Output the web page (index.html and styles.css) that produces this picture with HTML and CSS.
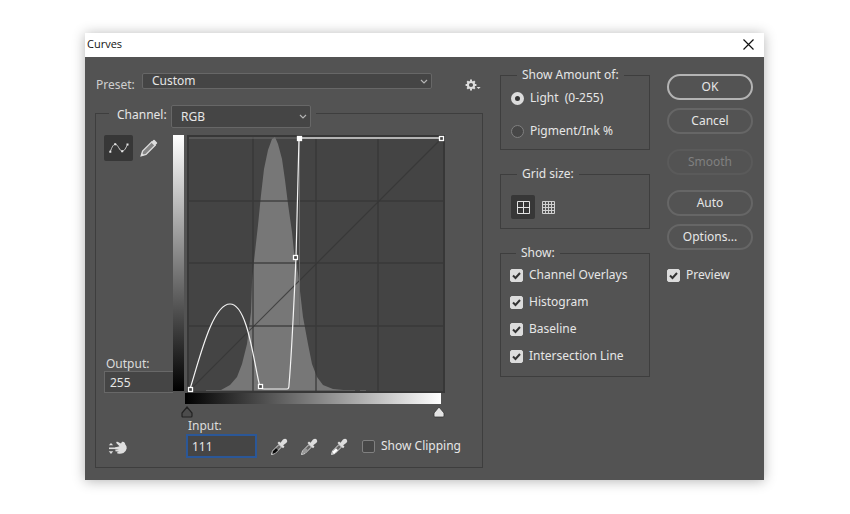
FILE: index.html
```html
<!DOCTYPE html>
<html lang="en">
<head>
  <meta charset="UTF-8" />
  <meta name="viewport" content="width=device-width, initial-scale=1.0"/>
  <title>Curves</title>
  <link rel="stylesheet" href="styles.css">
</head>
<body>

<div class="dialog">
  <div class="titlebar">
    <h1>Curves</h1>
    <button class="close" type="button" aria-label="Close">
      <svg width="11" height="11" viewBox="0 0 11 11"><path d="M0.5 0.5l10 10M10.5 0.5l-10 10" stroke="#111" stroke-width="1.2"/></svg>
    </button>
  </div>

  <form class="content">

    <div class="main">
      <div class="preset-row">
        <label for="preset">Preset:</label>
        <select id="preset" class="select preset">
          <option>Custom</option>
        </select>
        <button class="icon-btn gear" type="button" aria-label="Preset options">
          <svg width="16" height="12" viewBox="0 0 16 12">
            <circle cx="6" cy="6" r="3.1" fill="none" stroke="#dedede" stroke-width="2"/>
            <path d="M6 0.6v2M6 9.4v2M0.6 6h2M9.4 6h2M2.2 2.2l1.3 1.3M8.5 8.5l1.3 1.3M9.8 2.2L8.5 3.5M3.5 8.5L2.2 9.8" stroke="#dedede" stroke-width="2"/>
            <path d="M11.6 8h4l-2 2z" fill="#dedede"/>
          </svg>
        </button>
      </div>

      <fieldset class="curves">
        <legend class="channel">
          <label for="channel">Channel:</label>
          <select id="channel" class="select">
            <option>RGB</option>
          </select>
        </legend>

        <div class="plot">
          <div class="side">
            <div class="tools">
              <button class="icon-btn active" type="button" aria-label="Edit points">
                <svg width="20" height="12" viewBox="0 0 20 12">
                  <path d="M1.2 9.8C3 5 4.5 2.2 6.2 2.2C9 2.2 10.5 9.200 13.200 9.200C15.500 9.200 17 5.500 18.500 2.400" fill="none" stroke="#cfcfcf"/>
                  <path d="M0.300 8.800h2v2h-2zM5.200 1.200h2v2h-2zM12.200 8.200h2v2h-2zM17.500 1.400h2v2h-2z" fill="#e6e6e6"/>
                </svg>
              </button>
              <button class="icon-btn" type="button" aria-label="Draw curve">
                <svg width="18" height="18" viewBox="0 0 18 18">
                  <path d="M1.200 16.800L2.600 12L11.800 2.800L15.200 6.200L6 15.400Z" fill="#858585" stroke="#dedede" stroke-width="1.300"/>
                  <path d="M11.200 3.200L13.400 1Q14 0.500 14.600 1L17 3.400Q17.500 4 17 4.600L14.800 6.800ZM1 17l0.900-3 2.100 2.100z" fill="#dedede"/>
                </svg>
              </button>
            </div>
            <div class="field output-field">
              <label for="output">Output:</label>
              <input id="output" class="text" type="text" value="255">
            </div>
          </div>

          <div class="ramp-v"></div>

          <div class="graph-col">
            <svg class="graph" viewBox="0 0 258 258" role="img" aria-label="Tone curve">
              <rect x="1" y="1" width="256" height="256" fill="#444" stroke="#373737" stroke-width="2"/>
              <path d="M20 256L34 255 43 250 50 242 55 229 60 209 64 177 65 147 67 126 71 90 74 60 77 34 81 15 85 4 88 2 91 9 95 24 98 45 101 69 105 97 107 117 111 138 113 156 116 182 121 209 125 229 130 242 136 250 146 254 167 256Z" fill="#777"/>
              <path d="M19 255.500H168M173 255.500h6" stroke="#606060"/>
              <!-- quarter grid and baseline -->
              <g fill="none" stroke="#363636" stroke-opacity="0.800">
                <path d="M66 2V256M129 2V256M191 2V256M2 66H256M2 128H256M2 191H256" stroke-width="1.500"/>
                <path d="M3 255L255 3" stroke-width="1.200"/>
              </g>
              <path d="M2 3H112M112.500 3V190" stroke="#6c6c6c" fill="none"/>
              <path d="M112 3H254" stroke="#b4b4b4" stroke-width="2"/>
              <path d="M3 254C12 226 25 169 43 169C61 169 67 230 73 252Q74 254 77 254H100Q102 254 102 250C105 215 107 165 109 123L112 3" fill="none" stroke="#f4f4f4" stroke-width="1.200"/>
              <g fill="#444" stroke="#fff" stroke-width="1.300">
                <rect x="1.500" y="252.500" width="4" height="4"/>
                <rect x="71.500" y="249.500" width="4" height="4"/>
                <rect x="106.500" y="120.500" width="4" height="4"/>
                <rect x="252.500" y="1.500" width="4" height="4"/>
                <rect x="110.500" y="1.500" width="4" height="4" fill="#fff"/>
              </g>
            </svg>
            <div class="ramp-h"></div>
            <div class="markers">
              <svg width="12" height="12" viewBox="0 0 12 12"><path d="M6 1L11 7V10Q11 11 10 11H2Q1 11 1 10V7Z" fill="#4c4c4c" stroke="#222" stroke-width="1.200"/></svg>
              <svg width="12" height="12" viewBox="0 0 12 12"><path d="M6 1L11 7V10Q11 11 10 11H2Q1 11 1 10V7Z" fill="#e4e4e4" stroke="#333" stroke-width="0.800"/></svg>
            </div>
          </div>
        </div>

        <div class="bottom">
          <button class="icon-btn hand" type="button" aria-label="On-image adjustment">
            <svg width="20" height="16" viewBox="0 0 20 16">
              <path d="M0.800 5.300L3 2.900L5.200 5.300ZM0.800 11.300L3 13.900L5.200 11.300Z" fill="#dedede"/>
              <path d="M1 8.300H9" stroke="#dedede" stroke-width="1.600"/>
              <path d="M7 7.500L11.500 6.300 8.500 3.200Q7.500 1.500 9.500 1.800L13 3.500 14 1.800Q16 1.500 17 3.200L17.200 4.300Q19 6 18.700 8.500Q18 11.500 15.500 13Q13.500 14 11 13.800L9 13.200 9.500 12 11.300 11.700 7.300 11.200 7.500 10 11 9.700 7 9.200Z" fill="#dedede"/>
            </svg>
          </button>
          <div class="field input-field">
            <label for="input">Input:</label>
            <input id="input" class="text focused" type="text" value="111" autofocus>
          </div>
          <div class="droppers">
            <button class="icon-btn" type="button" aria-label="Set black point">
              <svg width="18" height="18" viewBox="0 0 18 18"><path d="M1.500 16.500L2.500 13L9 6.500L11.500 9L5 15.500Z" fill="#666" stroke="#dedede"/><path d="M2.500 15.700L3 13.200L6 10.300L8 12.300L4.800 15.200Z" fill="#080808"/><path d="M7.500 5l1.500-1.500 1.500 1.300 2.500-3.200Q15 0 16.700 1.400Q18 3 16.500 4.800L13.200 7.300 14.500 8.700 13 10.300Z" fill="#dedede"/></svg>
            </button>
            <button class="icon-btn" type="button" aria-label="Set gray point">
              <svg width="18" height="18" viewBox="0 0 18 18"><path d="M1.500 16.500L2.500 13L9 6.500L11.500 9L5 15.500Z" fill="#666" stroke="#dedede"/><path d="M2.500 15.700L3 13.200L6 10.300L8 12.300L4.800 15.200Z" fill="#999"/><path d="M7.500 5l1.500-1.500 1.500 1.300 2.500-3.200Q15 0 16.700 1.400Q18 3 16.500 4.800L13.200 7.300 14.500 8.700 13 10.300Z" fill="#dedede"/></svg>
            </button>
            <button class="icon-btn" type="button" aria-label="Set white point">
              <svg width="18" height="18" viewBox="0 0 18 18"><path d="M1.500 16.500L2.500 13L9 6.500L11.500 9L5 15.500Z" fill="#666" stroke="#dedede"/><path d="M2.500 15.700L3 13.200L6 10.300L8 12.300L4.800 15.200Z" fill="#fff"/><path d="M7.500 5l1.500-1.500 1.500 1.300 2.500-3.200Q15 0 16.700 1.400Q18 3 16.500 4.800L13.200 7.300 14.500 8.700 13 10.300Z" fill="#dedede"/></svg>
            </button>
          </div>
          <label class="option clipping"><input type="checkbox"> Show Clipping</label>
        </div>
      </fieldset>
    </div>

    <div class="settings">
      <fieldset class="group amount">
        <legend>Show Amount of:</legend>
        <label class="option"><input type="radio" name="amount" checked> Light&nbsp; (0-255)</label>
        <label class="option"><input type="radio" name="amount"> Pigment/Ink %</label>
      </fieldset>

      <fieldset class="group grid-size">
        <legend>Grid size:</legend>
        <button class="icon-btn active" type="button" aria-label="Quarter grid">
          <svg width="13" height="13" viewBox="0 0 13 13"><path d="M0.500 0.500h12v12h-12zM6.500 0.500v12M0.500 6.500h12" fill="none" stroke="#e4e4e4"/></svg>
        </button>
        <button class="icon-btn" type="button" aria-label="Detailed grid">
          <svg width="13" height="13" viewBox="0 0 13 13"><path d="M0.500 0.500h12v12h-12zM3.500 0.500v12M6.500 0.500v12M9.500 0.500v12M0.500 3.500h12M0.500 6.500h12M0.500 9.500h12" fill="none" stroke="#d0d0d0"/></svg>
        </button>
      </fieldset>

      <fieldset class="group show">
        <legend>Show:</legend>
        <label class="option"><input type="checkbox" checked> Channel Overlays</label>
        <label class="option"><input type="checkbox" checked> Histogram</label>
        <label class="option"><input type="checkbox" checked> Baseline</label>
        <label class="option"><input type="checkbox" checked> Intersection Line</label>
      </fieldset>
    </div>

    <div class="actions">
      <button class="btn primary" type="button">OK</button>
      <button class="btn" type="button">Cancel</button>
      <button class="btn spaced" type="button" disabled>Smooth</button>
      <button class="btn spaced" type="button">Auto</button>
      <button class="btn" type="button">Options...</button>
      <label class="option preview"><input type="checkbox" checked> Preview</label>
    </div>

  </form>
</div>

</body>
</html>
```
FILE: styles.css
```css
* { box-sizing: border-box; }
body { margin: 0; padding: 33px 86px 33px 85px; background: #fff; color: #e6e6e6; font: 12px/16px "Noto Sans", "Open Sans", sans-serif; }
button, input, select { font: inherit; color: inherit; margin: 0; }
fieldset { margin: 0; min-width: 0; border: 1px solid #3e3e3e; }
svg { display: block; flex: none; }

.dialog { background: #535353; box-shadow: 0 1px 12px rgba(0,0,0,0.3); }
.titlebar { display: flex; justify-content: space-between; align-items: center; height: 24px; padding: 0 10px 2px 2px; background: #fff; color: #111; }
.titlebar h1 { margin: 0; font: 11px/16px "Open Sans", sans-serif; }
.close { padding: 0; border: none; background: none; }
.content { display: flex; align-items: flex-start; gap: 17px; padding: 16px 11px 12px 10px; }
.main { flex: 1; min-width: 0; }

/* fields */
.select { appearance: none; padding: 0 20px 0 9px; border: 1px solid #676767; border-radius: 2px; background: #454545 url("data:image/svg+xml,%3Csvg xmlns='http://www.w3.org/2000/svg' width='8' height='5'%3E%3Cpath d='M1 1l3 3 3-3' fill='none' stroke='%23b4b4b4' stroke-width='1.2'/%3E%3C/svg%3E") no-repeat right 3px center; }
.text { display: block; width: 100%; height: 22px; padding: 0 5px; border: 1px solid #686868; background: #454545; }
.focused { height: 24px; padding: 0 4px; border: 2px solid #2b5797; outline: none; }
.field label { display: block; color: #dcdcdc; }
.icon-btn { display: flex; align-items: center; justify-content: center; padding: 0; border: none; border-radius: 2px; background: none; }
.active { background: #373737; }

.preset-row { display: flex; align-items: flex-start; height: 32px; padding-left: 1px; }
.preset-row label { width: 46px; padding-top: 4px; color: #cfcfcf; }
.preset { flex: 1; height: 16px; line-height: 14px; }
.gear { margin: 6px 2px 0 33px; }

/* curve editor */
.curves { padding: 14px 8px 9px; }
.channel { display: flex; align-items: flex-start; height: 16px; margin-left: 5px; padding: 0 5px 0 8px; }
.channel label { width: 54px; padding-top: 2px; }
.channel select { width: 140px; height: 23px; }
.plot { display: flex; }
.side { display: flex; flex-direction: column; justify-content: space-between; width: 69px; height: 258px; }
.tools { display: flex; gap: 7px; }
.tools .icon-btn { height: 26px; }
.tools .active { width: 29px; }
.output-field label { padding-left: 2px; line-height: 14px; }
.output-field .text { border-right: none; }
.ramp-v { width: 11px; height: 256px; margin-right: 1px; background: linear-gradient(#fff, #000); }
.graph-col { width: 260px; }
.graph { width: 258px; height: 258px; margin-left: 2px; }
.ramp-h { width: 256px; height: 11px; background: linear-gradient(90deg, #000, #fff); }
.markers { display: flex; justify-content: space-between; margin: 2px 0 0 -4px; }
.bottom { display: flex; align-items: flex-end; }
.hand { width: 82px; height: 20px; padding-left: 4px; justify-content: flex-start; }
.input-field { width: 71px; }
.input-field label { padding-left: 2px; }
.droppers { display: flex; gap: 12px; padding: 0 14px 2px 13px; }

/* options */
.option { display: flex; align-items: center; gap: 6px; white-space: nowrap; }
.option input { appearance: none; flex: none; width: 13px; height: 13px; border: 1px solid #808080; border-radius: 2px; background: #474747; }
.option input[type="checkbox"]:checked { border-color: #dcdcdc; background: #dcdcdc url("data:image/svg+xml,%3Csvg xmlns='http://www.w3.org/2000/svg' width='9' height='9'%3E%3Cpath d='M1 4.500l2.500 2.500L8 2' fill='none' stroke='%23333' stroke-width='2'/%3E%3C/svg%3E") no-repeat center; }
.option input[type="radio"] { border-radius: 50%; }
.option input[type="radio"]:checked { border: 4px solid #dcdcdc; background: #333; }
.clipping { padding-bottom: 4px; }

.settings { display: flex; flex-direction: column; gap: 16px; width: 150px; margin-top: -6px; }
.group { display: flex; flex-direction: column; padding: 0 9px; }
.group legend { margin-left: 6px; padding: 0 5px; }
.amount { gap: 17px; padding: 7px 10px 10px; }
.grid-size { flex-direction: row; align-items: center; gap: 7px; padding: 13px 10px 9px; }
.grid-size .active { width: 24px; height: 24px; }
.show { gap: 11px; padding: 6px 9px 12px; }

.actions { display: flex; flex-direction: column; gap: 8px; width: 86px; padding-top: 1px; }
.btn { height: 26px; padding: 0; border: 2px solid #666; border-radius: 13px; background: #535353; }
.primary { border-color: #b4b4b4; }
.btn:disabled { border-color: #5a5a5a; color: #808080; }
.spaced { margin-top: 7px; }
.preview { margin-top: 9px; }
```
